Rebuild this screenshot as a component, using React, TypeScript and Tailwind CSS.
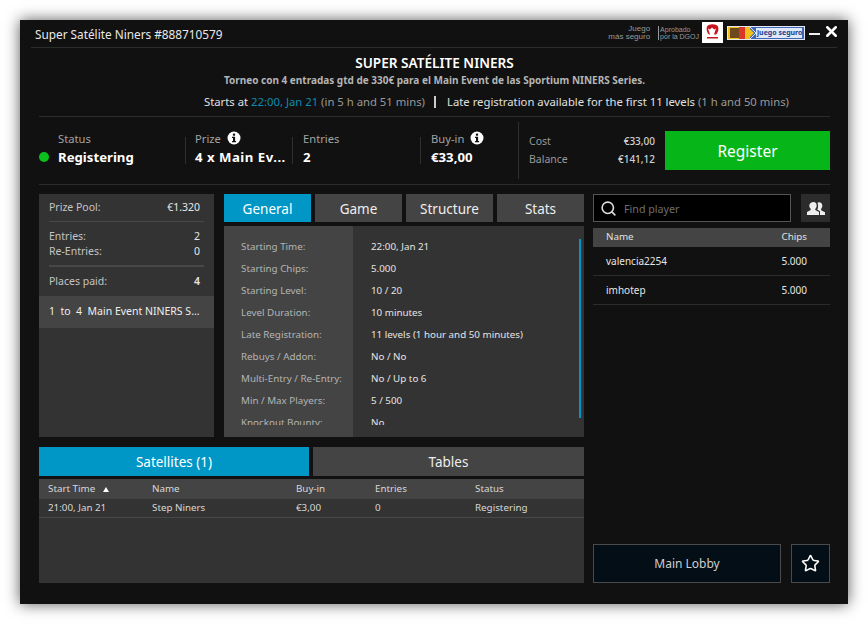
import React from "react";
import { Search, Star, X } from "lucide-react";

function Info() {
  return (
    <svg width="14" height="14" viewBox="0 0 14 14" className="ml-[6px] shrink-0">
      <circle cx="7" cy="7" r="6.5" fill="#fff" />
      <rect x="5.9" y="2.6" width="2.2" height="2.1" fill="#111" />
      <path d="M5 5.8h3.1v4.2h1v1.2H5V10h1V7H5z" fill="#111" />
    </svg>
  );
}

function Stat({ label, value, info, cls, valueCls }: { label: string; value: string; info?: boolean; cls: string; valueCls?: string }) {
  return (
    <div className={cls}>
      <div className="flex h-[15px] items-center text-[11.2px] leading-[15px] text-[#a3a3a3]">
        {label}
        {info && <Info />}
      </div>
      <div className={`mt-[1px] whitespace-nowrap text-[13.2px] font-bold leading-[20px] text-white ${valueCls ?? ""}`}>{value}</div>
    </div>
  );
}

const details = [
  ["Starting Time:", "22:00, Jan 21"],
  ["Starting Chips:", "5.000"],
  ["Starting Level:", "10 / 20"],
  ["Level Duration:", "10 minutes"],
  ["Late Registration:", "11 levels (1 hour and 50 minutes)"],
  ["Rebuys / Addon:", "No / No"],
  ["Multi-Entry / Re-Entry:", "No / Up to 6"],
  ["Min / Max Players:", "5 / 500"],
  ["Knockout Bounty:", "No"],
];

function Tab({ children, active, cls }: { children: string; active?: boolean; cls: string }) {
  return (
    <div
      className={`${cls} flex items-center justify-center text-[13.5px] ${
        active ? "bg-[#0097c7] text-white" : "bg-[#444444] text-[#eeeeee]"
      }`}
    >
      {children}
    </div>
  );
}

export default function App() {
  return (
    <div className="h-[624px] w-[868px] overflow-hidden bg-white pt-[20px] pl-[20px]">
      <div
        className="flex h-[584px] w-[828px] flex-col bg-[#111111] pl-[19px] pr-[18px] text-[#eeeeee] shadow-[0_0_14px_rgba(0,0,0,0.65)]"
        style={{ fontFamily: '"Noto Sans", "DejaVu Sans", sans-serif' }}
      >
        {/* Title bar */}
        <div className="-ml-[8px] -mr-[7px] flex h-[28px] items-center border-b border-[#2c2c2c] pl-[4px]">
          <div className="mt-[2px] text-[11.8px] text-[#e8e8e8]">Super Satélite Niners #888710579</div>
          <div className="-mr-[3px] -mt-[2px] ml-auto flex items-center" style={{ fontFamily: '"Liberation Sans", sans-serif' }}>
            <div className="text-right text-[8px] leading-[8px] text-[#999999]">
              Juego
              <br />
              más seguro
            </div>
            <div className="ml-[8px] h-[14px] w-px bg-[#999999]" />
            <div className="ml-[1px] text-[7px] leading-[7px] text-[#999999]">
              Aprobado
              <br />
              por la DGOJ
            </div>
            <div className="ml-[3px] flex h-[21px] w-[21px] items-center justify-center bg-white">
              <svg width="15" height="17" viewBox="0 0 15 17">
                <path d="M2 2.500c2-3 9-3 11 0 1 3 0 6-2 8H9l1-3 1-3-2 1-2-2-2 2-2-1 1 3 1 3H4C2 8.500 1 5.500 2 2.500z" fill="#c8141e" />
                <rect x="2" y="13" width="11" height="1.500" fill="#c8141e" />
              </svg>
            </div>
            <div className="ml-[4px] mt-[1px] flex h-[14px] w-[78px] items-center border border-[#e4e8f2] bg-[#3f66b8]">
              <svg width="28" height="12" viewBox="0 0 28 12" className="shrink-0">
                <rect width="22" height="12" fill="#f3c11c" />
                <rect x="2" y="1" width="9" height="10" fill="#6c4a1e" />
                <rect x="11" y="0" width="6" height="12" fill="#d8372a" />
                <path d="M17 0h3l6 6-6 6h-3z" fill="#f3c11c" />
                <path d="M22 0l6 6-6 6" fill="none" stroke="#dfe8f7" strokeWidth="1" />
              </svg>
              <div
                className="flex h-[10px] flex-1 items-center overflow-hidden whitespace-nowrap bg-[#dfe8f7] pl-[1px] text-[7px] font-bold text-[#1c3f94]"
                style={{ fontFamily: '"Noto Sans", sans-serif' }}
              >
                juego seguro
              </div>
              <div className="w-[2px] shrink-0" />
            </div>
            <div className="ml-[4px] mt-[3px] h-[2px] w-[11px] bg-[#eeeeee]" />
            <X size={17} strokeWidth={3.6} color="#fff" className="-mt-[2px] ml-[3px]" />
          </div>
        </div>

        {/* Header */}
        <div className="flex h-[69px] flex-col items-center border-b border-[#2c2c2c]">
          <div className="mt-[6px] text-[13.6px] font-semibold leading-[18px] text-white">SUPER SATÉLITE NINERS</div>
          <div className="mt-[1px] text-[10px] font-bold leading-[15px] text-[#b5b5b5]">
            Torneo con 4 entradas gtd de 330€ para el Main Event de las Sportium NINERS Series.
          </div>
          <div className="mt-[5px] flex self-end pr-[41px] text-[11.3px] leading-[18px]">
            <span className="text-[#e0e0e0]">Starts at&nbsp;</span>
            <span className="text-[#0a8cb4]">22:00, Jan 21</span>
            <span className="text-[#999999]">&nbsp;(in 5 h and 51 mins)</span>
            <span className="ml-[9px] mr-[11px] my-[3px] w-[2px] bg-[#cccccc]" />
            <span className="text-[#e0e0e0]">Late registration available for the first 11 levels&nbsp;</span>
            <span className="text-[#999999]">(1 h and 50 mins)</span>
          </div>
        </div>

        {/* Stats row */}
        <div className="flex h-[68px] items-stretch border-b border-[#2c2c2c]">
          <div className="flex w-[146px] items-center pb-[4px]">
            <div className="mt-[16px] h-[10px] w-[10px] rounded-full bg-[#0cc01c]" />
            <Stat label="Status" value="Registering" cls="ml-[9px]" />
          </div>
          <div className="my-[20px] w-px bg-[#2f2f2f]" />
          <div className="flex w-[106px] items-center pb-[4px] pl-[9px]">
            <Stat label="Prize" value="4 x Main Ev..." info cls="" valueCls="tracking-[0.5px]" />
          </div>
          <div className="my-[20px] w-px bg-[#2f2f2f]" />
          <div className="flex w-[127px] items-center pb-[4px] pl-[10px]">
            <Stat label="Entries" value="2" cls="" />
          </div>
          <div className="my-[20px] w-px bg-[#2f2f2f]" />
          <div className="flex w-[97px] items-center pb-[4px] pl-[10px]">
            <Stat label="Buy-in" value="€33,00" info cls="" />
          </div>
          <div className="my-[5px] w-px bg-[#2f2f2f]" />
          <div className="flex w-[146px] flex-col justify-center pb-[2px] pl-[10px] pr-[10px] text-[10.5px] leading-[18px]">
            <div className="flex justify-between">
              <span className="text-[#999999]">Cost</span>
              <span className="text-[10px] font-medium text-[#d0d0d0]">€33,00</span>
            </div>
            <div className="flex justify-between">
              <span className="text-[#999999]">Balance</span>
              <span className="text-[10px] font-medium text-[#d0d0d0]">€141,12</span>
            </div>
          </div>
          <div className="mb-[14px] mt-[14px] flex w-[165px] items-center justify-center bg-[#06b517] pt-[2px] text-[15.5px] text-white">
            Register
          </div>
        </div>

        {/* Main */}
        <div className="mt-[9px] flex gap-[9px]">
          <div className="flex w-[545px] flex-col">
            <div className="flex h-[243px] gap-[10px]">
              {/* Left summary */}
              <div className="flex w-[175px] flex-col bg-[#333333] text-[10.5px] text-[#c4c4c4]">
                <div className="mx-[10px] flex h-[28px] items-center justify-between border-b border-[#484848] pr-[4px]">
                  <span>Prize Pool:</span>
                  <span className="text-[#e6e6e6]">€1.320</span>
                </div>
                <div className="mx-[10px] flex h-[45px] flex-col justify-center border-b-2 border-[#484848] pr-[4px] leading-[15px]">
                  <div className="flex justify-between">
                    <span>Entries:</span>
                    <span className="text-[#e6e6e6]">2</span>
                  </div>
                  <div className="flex justify-between">
                    <span>Re-Entries:</span>
                    <span className="text-[#e6e6e6]">0</span>
                  </div>
                </div>
                <div className="mx-[10px] flex h-[29px] items-center justify-between pr-[4px]">
                  <span>Places paid:</span>
                  <span className="font-semibold text-[#e6e6e6]">4</span>
                </div>
                <div className="flex h-[32px] items-center bg-[#444444] pl-[10px] text-[#eeeeee]">
                  <span className="whitespace-nowrap">1&nbsp; to&nbsp; 4&nbsp; Main Event NINERS S...</span>
                </div>
              </div>

              {/* Tabs and details */}
              <div className="flex w-[360px] flex-col">
                <div className="flex h-[28px] gap-[4px] [&>div]:pt-[2px]">
                  <Tab active cls="w-[87px]">General</Tab>
                  <Tab cls="w-[87px]">Game</Tab>
                  <Tab cls="w-[87px]">Structure</Tab>
                  <Tab cls="w-[87px]">Stats</Tab>
                </div>
                <div className="relative mt-[4px] flex h-[211px] bg-[#333333] text-[9.8px]">
                  <div className="h-full w-[129px] shrink-0 bg-[#444444] pt-[10px]">
                    <div className="h-[189px] overflow-hidden pl-[17px] text-[#b4b4b4]">
                      {details.map(([k]) => (
                        <div key={k} className="flex h-[22px] items-center whitespace-nowrap">{k}</div>
                      ))}
                    </div>
                  </div>
                  <div className="h-full flex-1 pt-[10px]">
                    <div className="h-[189px] overflow-hidden pl-[18px] text-[#e4e4e4]">
                      {details.map(([k, v]) => (
                        <div key={k} className="flex h-[22px] items-center whitespace-nowrap">{v}</div>
                      ))}
                    </div>
                  </div>
                  <div className="absolute right-[3px] top-[13px] h-[179px] w-[2px] bg-[#0097c7]" />
                </div>
              </div>
            </div>

            {/* Bottom tabs */}
            <div className="mt-[10px] flex h-[29px] gap-[4px] [&>div]:pt-[1px]">
              <Tab active cls="w-[270px]">Satellites (1)</Tab>
              <Tab cls="w-[271px]">Tables</Tab>
            </div>
            <div className="mt-[3px] h-[104px] bg-[#333333] text-[9.8px]">
              <div className="flex h-[20px] items-center bg-[#444444] text-[#d8d8d8]">
                <div className="flex w-[113px] items-center pl-[9px]">
                  Start Time
                  <span className="ml-[8px] h-0 w-0 border-x-[3px] border-b-[5px] border-x-transparent border-b-white" />
                </div>
                <div className="w-[144px]">Name</div>
                <div className="w-[79px]">Buy-in</div>
                <div className="w-[100px]">Entries</div>
                <div>Status</div>
              </div>
              <div className="flex h-[19px] items-center border-b border-[#484848] text-[#d8d8d8]">
                <div className="w-[113px] pl-[9px]">21:00, Jan 21</div>
                <div className="w-[144px]">Step Niners</div>
                <div className="w-[79px]">€3,00</div>
                <div className="w-[100px]">0</div>
                <div>Registering</div>
              </div>
            </div>
          </div>

          {/* Right column */}
          <div className="flex h-[389px] w-[237px] flex-col">
            <div className="flex h-[28px] justify-between">
              <div className="flex w-[198px] items-center border border-[#555555] bg-black pl-[6px] text-[10.7px] text-[#6e6e6e]">
                <Search size={17} strokeWidth={2.3} color="#dddddd" />
                <span className="ml-[7px] mt-[2px]">Find player</span>
              </div>
              <div className="flex w-[29px] items-center justify-center bg-[#2c2c2c]">
                <svg width="18" height="15" viewBox="0 0 18 15" fill="#eeeeee">
                  <path d="M6.500 1c2 0 3.200 1.500 3.200 3.500 0 1.400-.6 2.600-1.400 3.300v1.200l3.700 2V14H0v-3l3.700-2V7.800C2.900 7.100 2.300 5.900 2.300 4.500 2.300 2.500 4.500 1 6.500 1z" />
                  <path d="M13 14v-3.800L10.200 8.600c.5-.9.900-2.300.9-3.700 0-1.200-.2-2.300-.7-3.100.4-.3 1-.5 1.700-.5 2 0 3.200 1.500 3.200 3.400 0 1.300-.5 2.500-1.200 3.200v1.300l3.900 2V14z" />
                </svg>
              </div>
            </div>
            <div className="mt-[6px] flex h-[19px] items-center justify-between bg-[#444444] pl-[13px] pr-[23px] text-[9.8px] text-[#e0e0e0]">
              <span>Name</span>
              <span>Chips</span>
            </div>
            <div className="flex h-[29px] items-center justify-between border-b border-[#2c2c2c] pl-[13px] pr-[23px] text-[10px] text-[#e6e6e6]">
              <span>valencia2254</span>
              <span>5.000</span>
            </div>
            <div className="flex h-[29px] items-center justify-between border-b border-[#2c2c2c] pl-[13px] pr-[23px] text-[10px] text-[#e6e6e6]">
              <span>imhotep</span>
              <span>5.000</span>
            </div>
            <div className="mt-auto flex h-[39px] justify-between">
              <div className="flex w-[188px] items-center justify-center border border-[#4a4a4a] bg-[#030e16] text-[12px] text-[#cfcfcf]">
                Main Lobby
              </div>
              <div className="flex w-[39px] items-center justify-center border border-[#4a4a4a] bg-[#030e16]">
                <Star size={19} strokeWidth={2} color="#ffffff" />
              </div>
            </div>
          </div>
        </div>
      </div>
    </div>
  );
}
